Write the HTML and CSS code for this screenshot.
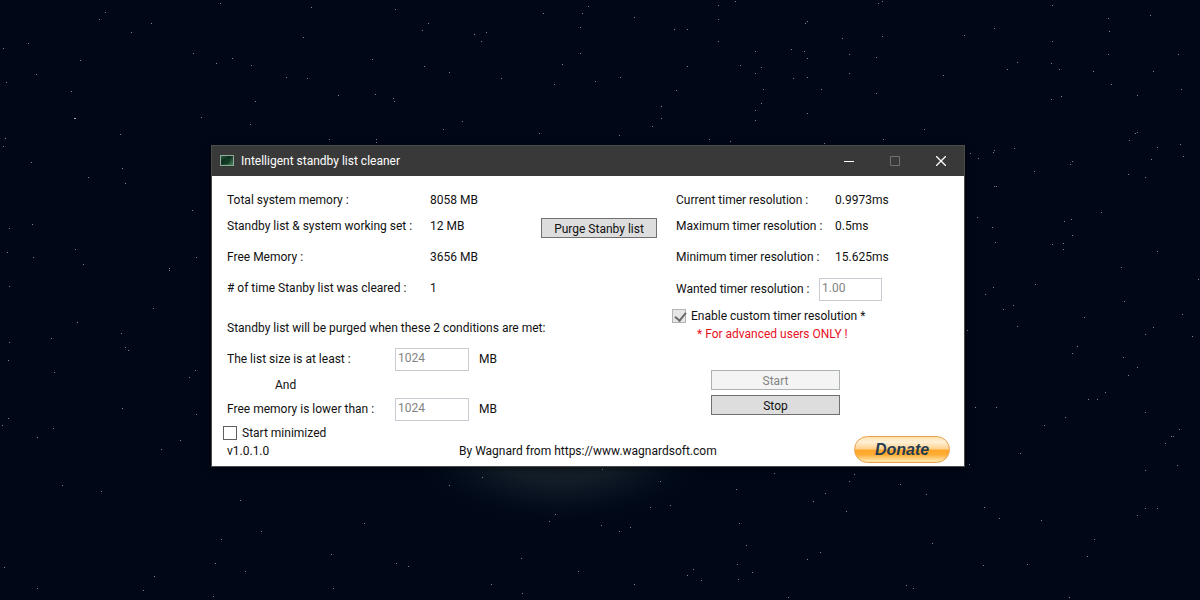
FILE: index.html
```html
<!DOCTYPE html>
<html lang="en">
<head>
<meta charset="utf-8">
<title>Intelligent standby list cleaner</title>
<link rel="stylesheet" href="styles.css">
</head>
<body class="desktop">
<svg class="wallpaper" viewBox="0 0 1200 600" preserveAspectRatio="xMidYMid slice" aria-hidden="true">
  <defs>
    <radialGradient id="glow">
      <stop offset="0" stop-color="#1a232c"/>
      <stop offset="0.45" stop-color="#131d28"/>
      <stop offset="0.7" stop-color="#06101f" stop-opacity="0.8"/>
      <stop offset="1" stop-color="#000716" stop-opacity="0"/>
    </radialGradient>
  </defs>
  <ellipse cx="560" cy="440" rx="170" ry="92" fill="url(#glow)"/>
  <path class="stars" d="M105 12h1M99 19h1M151 23h1M131 32h1M28 43h1M3 48h1M80 60h1M36 74h1M6 82h1M71 91h1M120 134h1M5 138h1M3 146h1M31 162h1M88 177h1M122 168h1M125 183h1M193 53h1M216 63h1M232 58h1M251 65h1M286 77h1M307 78h1M220 3h1M311 7h1M395 9h1M303 37h1M372 59h1M338 95h1M375 94h1M393 98h1M394 101h1M255 101h1M201 117h1M250 124h1M329 139h1M376 139h1M376 142h1
  M422 30h1M428 23h1M474 34h1M486 32h1M481 41h1M543 13h1M582 13h1M588 6h1M580 27h1M634 17h1M580 53h1M562 64h1M424 66h1M449 72h1M501 78h1M554 84h1M595 81h1M620 77h1M676 90h1M661 106h1M661 118h1M652 126h1M462 121h1M443 129h1M539 133h1M619 135h1M709 139h1M730 141h1M674 29h1M687 29h1M687 66h1M718 5h1M718 19h1M718 41h1M735 1h1M755 51h1M740 65h1M755 73h1M761 67h1M791 49h1M793 78h1M763 89h1M761 103h1M755 110h1M755 120h1
  M805 23h1M807 21h1M878 3h1M882 1h1M842 38h1M882 36h1M804 51h1M807 58h1M849 54h1M876 57h1M849 73h1M807 77h1M821 89h1M876 93h1M807 113h1M943 75h1M964 35h1M994 28h1M924 129h1M883 139h1M824 143h1M1052 5h1M1108 18h1M1109 31h1M1150 15h1M1052 41h1M1108 54h1M1178 54h1M1017 62h1M1007 69h1M1051 63h1M1059 69h1M1093 71h1M1153 71h1M1111 84h1M1181 89h1M1137 95h1M1061 96h1M1051 99h1M1137 132h1M1135 133h1M1129 140h1M1180 144h1M1157 147h1M1183 156h1M1151 159h1M1014 148h1M994 150h1M993 152h1M970 153h1M978 158h1M1072 161h1M1070 164h1M1034 171h1M1128 174h1M1145 177h1M994 186h1M996 186h1
  M192 210h1M32 224h1M9 228h1M7 252h1M33 257h1M75 249h1M83 264h1M196 257h1M169 268h1M169 270h1M9 286h1M153 308h1M77 322h1M121 333h1M51 338h1M9 342h1M125 347h1M128 350h1M8 360h1M54 372h1M195 370h1M189 377h1M122 408h1M196 414h1M8 418h1M2 425h1M53 428h1M37 437h1M180 440h1M161 449h1M62 485h1M101 491h1M240 500h1M364 523h1M261 531h1M221 539h1M331 554h1M215 563h1M245 571h1M396 563h1M4 567h1M154 576h1M143 590h1M37 588h1M333 588h1M213 596h1
  M482 477h1M449 485h1M602 469h1M774 473h1M660 481h1M736 489h1M650 507h1M670 505h1M555 514h1M549 521h1M601 525h1M630 527h1M619 531h1M739 523h1M746 545h1M521 558h1M408 566h1M578 571h1M693 569h1M687 575h1M701 580h1M737 564h1M752 572h1M738 579h1M491 584h1M634 584h1M522 593h1M788 597h1
  M1101 212h1M977 217h1M992 227h1M1071 219h1M1064 221h1M1072 235h1M995 242h1M1052 244h1M1063 243h1M1063 249h1M1157 251h1M1121 267h1M1198 279h1M1035 284h1M993 287h1M985 294h1M1124 301h1M1013 305h1M1003 309h1M1182 314h1M1084 317h1M1017 326h1M1153 327h1M1145 334h1M1192 336h1M967 330h1M1077 346h1M1072 353h1M1123 357h1M1137 367h1M1128 375h1M1105 392h1M1088 399h1M1097 399h1M975 407h1M996 407h1M1145 412h1M1065 417h1M1044 425h1M1179 429h1M1171 436h1M1173 436h1M1165 443h1M1020 453h1M969 464h1M1177 465h1M1145 470h1M854 474h1M849 481h1M900 484h1M825 493h1M926 494h1M813 501h1M846 511h1M984 507h1M1145 508h1M1157 508h1M1137 515h1M999 518h1M1041 520h1M1094 539h1M932 543h1M820 552h1M807 559h1M1087 556h1M983 565h1M1027 564h1M906 585h1M913 588h1M1069 597h1"/>
  <path class="stars stars-bright" d="M74 118h2"/>
</svg>

<main class="window">
  <header class="titlebar">
    <svg class="app-icon" width="14" height="12" viewBox="0 0 14 12" aria-hidden="true">
      <defs><linearGradient id="screen" x1="0" y1="0" x2="1" y2="1"><stop offset="0" stop-color="#2f6b45"/><stop offset="0.4" stop-color="#0d2b1d"/><stop offset="1" stop-color="#48875a"/></linearGradient></defs>
      <rect x="0.5" y="0.5" width="13" height="10" fill="url(#screen)" stroke="#93a99a"/>
      <path d="M3 8l3-5 3 0 1 3-2 3z" fill="#123a25"/>
      <path d="M1 11.5h12" stroke="#24382c"/>
    </svg>
    <h1 class="title">Intelligent standby list cleaner</h1>
    <button class="caption" aria-label="Minimize"><svg width="10" height="10" viewBox="0 0 10 10"><path d="M0 5.5h10" stroke="#fff"/></svg></button>
    <button class="caption" aria-label="Maximize" disabled><svg width="10" height="10" viewBox="0 0 10 10"><path d="M.5.5h9v9h-9z" fill="none" stroke="#707070"/></svg></button>
    <button class="caption" aria-label="Close"><svg width="10" height="10" viewBox="0 0 10 10"><path d="M0 0l10 10M10 0L0 10" stroke="#fff" stroke-width="1.3"/></svg></button>
  </header>

  <div class="content">
    <section class="memory">
      <dl class="stats">
        <dt>Total system memory :</dt><dd>8058 MB</dd>
        <dt>Standby list &amp; system working set :</dt><dd>12 MB</dd>
        <dt>Free Memory :</dt><dd>3656 MB</dd>
        <dt># of time Stanby list was cleared :</dt><dd>1</dd>
      </dl>
      <button class="btn purge">Purge Stanby list</button>
      <div class="conditions">
        <p class="intro">Standby list will be purged when these 2 conditions are met:</p>
        <label for="list-size">The list size is at least :</label>
        <input class="field" id="list-size" value="1024" disabled><span>MB</span>
        <p class="and">And</p>
        <label for="free-memory">Free memory is lower than :</label>
        <input class="field" id="free-memory" value="1024" disabled><span>MB</span>
      </div>
      <label class="check"><input type="checkbox">Start minimized</label>
    </section>

    <section class="timer">
      <dl class="stats timer-stats">
        <dt>Current timer resolution :</dt><dd>0.9973ms</dd>
        <dt>Maximum timer resolution :</dt><dd>0.5ms</dd>
        <dt>Minimum timer resolution :</dt><dd>15.625ms</dd>
      </dl>
      <div class="wanted">
        <label for="wanted">Wanted timer resolution :</label>
        <input class="field" id="wanted" value="1.00" disabled>
      </div>
      <label class="check"><input type="checkbox" checked disabled>Enable custom timer resolution *</label>
      <p class="warning">* For advanced users ONLY !</p>
      <div class="actions">
        <button class="btn" disabled>Start</button>
        <button class="btn">Stop</button>
      </div>
    </section>
  </div>

  <footer class="footer">
    <span>v1.0.1.0</span>
    <span>By Wagnard from https://www.wagnardsoft.com</span>
    <button class="donate">Donate</button>
  </footer>
</main>
</body>
</html>
```
FILE: styles.css
```css
* { box-sizing: border-box; }

.desktop {
  margin: 0;
  min-height: 100vh;
  position: relative;
  overflow: hidden;
  background: #000716;
  color: #111;
  font: 12px/16px Roboto, "Open Sans", sans-serif;
}

.wallpaper {
  position: absolute;
  inset: 0;
  width: 100%;
  height: 100%;
}

.stars { stroke: #7b8592; stroke-width: 1; shape-rendering: crispEdges; }
.stars-bright { stroke: #a9b2bd; }

.window {
  position: absolute;
  top: 145px;
  left: 211px;
  width: 754px;
  background: #fff;
  border: 1px solid #4a4b4c;
  box-shadow: 0 2px 8px rgba(0, 0, 0, 0.5);
}

.titlebar {
  display: flex;
  align-items: center;
  height: 30px;
  padding-left: 8px;
  background: #393939;
  color: #fff;
}

.app-icon { margin-right: 7px; }

.title {
  flex: 1;
  margin: 0;
  font-size: 12px;
  font-weight: 400;
}

.caption {
  display: grid;
  place-items: center;
  width: 46px;
  height: 28px;
  padding: 0;
  border: 0;
  background: none;
}

.content {
  display: grid;
  grid-template-columns: 460px 1fr;
  padding-top: 11px;
}

p { margin: 0; }

.memory {
  display: grid;
  grid-template-columns: 1fr 116px;
  padding-left: 15px;
  padding-right: 15px;
}

.stats {
  display: grid;
  grid-template-columns: 203px 1fr;
  grid-template-rows: 26px 26px 36px 26px;
  align-items: center;
  margin: 0;
  white-space: nowrap;
}

.stats dd { margin: 0; }

.btn {
  height: 20px;
  padding: 1px 0 0;
  border: 1px solid #707070;
  background: #ddd;
  color: #111;
  font: inherit;
}

.btn:disabled {
  border-color: #adb2b5;
  background: #f4f4f4;
  color: #838383;
}

.purge { margin-top: 31px; }

.conditions {
  grid-column: 1 / -1;
  display: grid;
  grid-template-columns: 168px 74px 1fr;
  grid-template-rows: 26px 36px 16px 32px;
  align-items: center;
  margin-top: 14px;
}

.conditions span { padding-left: 10px; }
.intro { grid-column: 1 / -1; }
.and { grid-column: 1 / -1; padding-left: 48px; }

.field {
  width: 100%;
  height: 23px;
  padding: 0 2px 3px;
  border: 1px solid #c8ccd2;
  background: #fff;
  color: #838383;
  font: inherit;
}

.check {
  display: flex;
  align-items: center;
  gap: 5px;
  height: 16px;
  margin-left: -4px;
}

.check input {
  appearance: none;
  width: 14px;
  height: 14px;
  margin: 0;
  border: 1px solid #606060;
  background: #fff;
}

.check input:disabled { border-color: #b4b4b4; background: #e6e6e6; }

.check input:checked::before {
  content: "";
  display: block;
  width: 5px;
  height: 9px;
  margin: 0 0 0 4px;
  border: solid #6a6a6a;
  border-width: 0 2px 2px 0;
  transform: rotate(40deg);
}

.timer { padding-left: 4px; }

.timer-stats {
  grid-template-columns: 159px 1fr;
  grid-template-rows: 26px 26px 36px;
}

.wanted {
  display: grid;
  grid-template-columns: 143px 63px;
  align-items: center;
  height: 28px;
}

.timer .check { margin-top: 5px; }

.warning { margin: 2px 0 0 21px; color: #e81123; }

.actions {
  display: grid;
  gap: 5px;
  width: 129px;
  margin: 28px 0 0 35px;
}

.footer {
  display: grid;
  grid-template-columns: 232px 1fr 96px;
  align-items: center;
  height: 25px;
  padding: 0 14px 6px 15px;
}

.donate {
  height: 27px;
  margin: -6px 0 -4px;
  padding: 0;
  border: 1px solid #e8a04c;
  border-radius: 14px;
  background: linear-gradient(#ffe2b0 0%, #fff0d6 20%, #ffd391 46%, #ffa62b 54%, #ffac33 70%, #ffe0a0 94%);
  color: #243c50;
  font: italic bold 16px/20px "Liberation Sans", sans-serif;
}
```
